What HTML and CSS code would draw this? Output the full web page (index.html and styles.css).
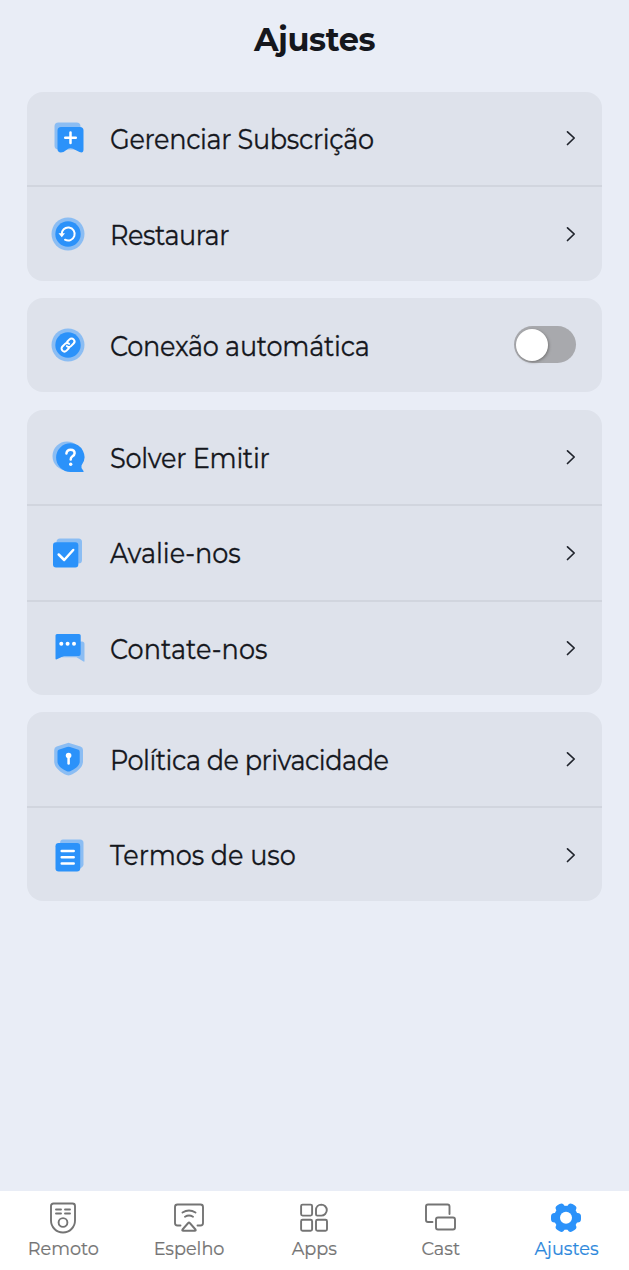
FILE: index.html
```html
<!DOCTYPE html>
<html lang="pt">
<head>
<meta charset="utf-8">
<title>Ajustes</title>
<link rel="stylesheet" href="styles.css">
</head>
<body>
<div class="screen">
  <header class="header"><h1 class="title">Ajustes</h1></header>
  <main class="groups">
    <section class="card">
      <div class="row">
        <svg class="icon" viewBox="0 0 36 36"><rect class="pale" x="4.5" y="2.5" width="26" height="27" rx="4"/><path class="blue" d="M11 7h19q3.500 0 3.500 3.500v19q0 4-4 2.500l-7-3.500q-2-.8-4 0l-5 3.500q-6 1.500-6-3V10.500Q7.500 7 11 7z"/><path class="mark" d="M20.500 12.500v10.500M15.200 17.700h10.600"/></svg>
        <span class="label l1">Gerenciar Subscrição</span>
        <svg class="chevron" viewBox="0 0 12 18"><path d="M2.500 2.800l6.700 6.200-6.700 6.500"/></svg>
      </div>
      <div class="row">
        <svg class="icon" viewBox="0 0 36 36"><circle class="pale" cx="18" cy="18" r="16.500"/><circle class="blue" cx="18" cy="18" r="12.700"/><path class="mark thin" d="M11.700 18.500A6.500 6.500 0 1 1 15 23.700"/><path class="white" d="M8.500 17.300h6.500l-3.200 4z"/></svg>
        <span class="label l2">Restaurar</span>
        <svg class="chevron" viewBox="0 0 12 18"><path d="M2.500 2.800l6.700 6.200-6.700 6.500"/></svg>
      </div>
    </section>
    <section class="card auto">
      <div class="row">
        <svg class="icon" viewBox="0 0 36 36"><circle class="pale" cx="18" cy="18" r="16.500"/><circle class="blue" cx="18" cy="18" r="12.700"/><g class="mark thin" transform="rotate(-45 18 18)"><path d="M16.300 20.900h-3.300a2.900 2.900 0 0 1 0-5.800h3.700a2.900 2.900 0 0 1 2.900 2.900"/><path d="M19.700 15.100h3.300a2.900 2.900 0 0 1 0 5.800h-3.700a2.900 2.900 0 0 1-2.900-2.900"/></g></svg>
        <span class="label l3">Conexão automática</span>
        <span class="toggle"><span class="knob"></span></span>
      </div>
    </section>
    <section class="card tall">
      <div class="row">
        <svg class="icon" viewBox="0 0 36 36"><circle class="pale" cx="17" cy="17" r="14.500"/><path class="blue" d="M20.500 4.200A13.800 13.800 0 0 1 31.500 26.500v2.500l2 3q.5 1-1 1H20.500A14.400 14.400 0 0 1 20.500 4.200z"/><path class="mark" d="M16.400 14.500q.5-3.800 4.200-3.800 4 0 4 3.500 0 1.800-2.400 3.300-1.500 1-1.500 3"/><circle class="white" cx="20.700" cy="25.300" r="1.700"/></svg>
        <span class="label l4">Solver Emitir</span>
        <svg class="chevron" viewBox="0 0 12 18"><path d="M2.500 2.800l6.700 6.200-6.700 6.500"/></svg>
      </div>
      <div class="row">
        <svg class="icon" viewBox="0 0 36 36"><rect class="pale" x="6.500" y="3.500" width="25.500" height="25" rx="3.500"/><rect class="blue" x="3" y="7.200" width="25.300" height="25.300" rx="3"/><path class="mark" d="M8.700 19.500l5.500 5.500 9-10"/></svg>
        <span class="label l5">Avalie-nos</span>
        <svg class="chevron" viewBox="0 0 12 18"><path d="M2.500 2.800l6.700 6.200-6.700 6.500"/></svg>
      </div>
      <div class="row">
        <svg class="icon" viewBox="0 0 36 36"><path class="pale" d="M12 11.500h20q2.500 0 2.500 2.500v17q0 1-1 .5l-7-4.200H12z"/><path class="blue" d="M7 4h22q1.700 0 1.700 1.500V24q0 2-2 2H14l-7.200 3.300q-1.300.5-1.300-.8v-23Q5.500 4 7 4z"/><g class="white"><circle cx="11.300" cy="13.800" r="2"/><circle cx="17.600" cy="13.800" r="2"/><circle cx="24" cy="13.800" r="2"/></g></svg>
        <span class="label l6">Contate-nos</span>
        <svg class="chevron" viewBox="0 0 12 18"><path d="M2.500 2.800l6.700 6.200-6.700 6.500"/></svg>
      </div>
    </section>
    <section class="card tall">
      <div class="row">
        <svg class="icon" viewBox="0 0 36 36"><path class="pale" d="M17 2.200q1.500-.7 3 0L30.500 5.500q2.500.8 2.500 3.500v11.500c0 6.500-7.500 11.500-12.500 13.500q-2 .8-4 0C11.500 32 4.200 27 4.200 20.500V9q0-2.700 2.500-3.500z"/><path class="blue" d="M17 6q1.500-.7 3 0l8.500 2.700q1.200.4 1.200 2v10c0 4.500-6 8-9.500 9.500q-1.700.8-3.400 0C13.300 28.700 7.500 25.200 7.500 20.700v-10q0-1.600 1.200-2z"/><circle class="white" cx="18.600" cy="14.500" r="2.800"/><path class="mark" d="M18.600 16v6.500"/></svg>
        <span class="label l7">Política de privacidade</span>
        <svg class="chevron" viewBox="0 0 12 18"><path d="M2.500 2.800l6.700 6.200-6.700 6.500"/></svg>
      </div>
      <div class="row">
        <svg class="icon" viewBox="0 0 36 36"><path class="pale" d="M13 2.500h17q3.500 0 3.500 3.500v21.500q0 2-4 4.500L10 6.500q0-4 3-4z"/><rect class="blue" x="5.500" y="6" width="24.700" height="28.500" rx="3.200"/><path class="mark" d="M11.700 14h12M11.700 20.300h12M11.700 26.600h12"/></svg>
        <span class="label l8">Termos de uso</span>
        <svg class="chevron" viewBox="0 0 12 18"><path d="M2.500 2.800l6.700 6.200-6.700 6.500"/></svg>
      </div>
    </section>
  </main>
  <nav class="tabs">
    <a class="tab"><svg class="tab-icon" viewBox="0 0 32 32"><path d="M6.500 1.500h19q2.500 0 2.500 2.500v14.500a12 12 0 0 1-24 0V4q0-2.500 2.500-2.500zM9 7.500h5M18 7.500h5M9 11.500h5M18 11.500h5"/><circle cx="16" cy="20.500" r="4.400"/></svg><span>Remoto</span></a>
    <a class="tab"><svg class="tab-icon" viewBox="0 0 32 32"><path d="M7.500 23.500h-3Q2 23.500 2 21V5q0-2.500 2.500-2.500h23Q30 2.500 30 5v16q0 2.500-2.500 2.500h-3M9.500 10.500q6.500-4 13 0M12 14.800q4-2.500 8 0M15.200 21q.8-1 1.600 0l5.700 6.500q.8 1.300-.8 1.300h-11.400q-1.600 0-.8-1.300z"/></svg><span>Espelho</span></a>
    <a class="tab"><svg class="tab-icon" viewBox="0 0 32 32"><rect x="3.100" y="2.600" width="11" height="11" rx="1.500"/><path d="M23.300 2.600a5.500 5.500 0 0 1 0 11h-4q-1.300 0-1.300-1.300V8.100a5.500 5.500 0 0 1 5.300-5.500z"/><rect x="3.100" y="17.800" width="11" height="11" rx="1.500"/><rect x="18" y="17.800" width="11" height="11" rx="1.500"/></svg><span>Apps</span></a>
    <a class="tab"><svg class="tab-icon" viewBox="0 0 32 32"><path d="M8.500 20H4q-2 0-2-2V4.500q0-2 2-2h19.500q2 0 2 2V12"/><rect x="12" y="15.500" width="19" height="12" rx="2"/></svg><span>Cast</span></a>
    <a class="tab active"><svg class="tab-icon" viewBox="0 0 32 32"><circle cx="16" cy="15.700" r="12"/><rect x="1" y="11" width="30" height="9.400" rx="3.500"/><rect x="1" y="11" width="30" height="9.400" rx="3.500" transform="rotate(60 16 15.700)"/><rect x="1" y="11" width="30" height="9.400" rx="3.500" transform="rotate(120 16 15.700)"/><circle class="white" cx="16" cy="15.700" r="6"/></svg><span>Ajustes</span></a>
  </nav>
</div>
</body>
</html>
```
FILE: styles.css
```css
* { box-sizing: border-box; }
body { margin: 0; background: #e9edf6; color: #15171d; font-family: Montserrat, Inter, "Noto Sans", sans-serif; }
.screen { height: 1270px; display: flex; flex-direction: column; }
.header { height: 91.5px; padding-top: 20px; text-align: center; }
.title { margin: 0; font-size: 32px; line-height: 40px; font-weight: 700; letter-spacing: -0.4px; }
.groups { flex: 1; display: flex; flex-direction: column; gap: 17px; padding: 0 27px; }
.card { background: #dee2eb; border-radius: 16px; }
.auto { margin: 0 0 1.5px; }
.row { height: 93.5px; display: flex; align-items: center; padding: 0 26.5px 0 23px; }
.row + .row { height: 95.5px; border-top: 2px solid #d1d5de; }
.auto .row { height: 94px; }
.tall .row { height: 94.3px; }
.tall .row + .row { height: 95.3px; }
.icon { width: 36px; height: 36px; flex: none; }
.label { flex: 1; margin-left: 23.5px; padding-top: 2px; font-size: 27.5px; line-height: 34px; -webkit-text-stroke: 0.3px currentColor; white-space: nowrap; transform: scaleX(0.93); transform-origin: 0 50%; }
.tall .label { padding-top: 1px; }
.l1 { letter-spacing: -0.37px; }
.l2 { letter-spacing: -0.5px; }
.l3 { letter-spacing: -0.28px; }
.l4 { letter-spacing: -0.28px; }
.l5 { letter-spacing: -0.05px; }
.l6 { letter-spacing: 0.05px; }
.l7 { letter-spacing: -0.52px; }
.l8 { letter-spacing: -0.05px; }
.pale { fill: #8bbdf3; }
.blue { fill: #2b92fa; }
.white { fill: #fff; }
.mark { fill: none; stroke: #fff; stroke-width: 2.5; stroke-linecap: round; stroke-linejoin: round; }
.thin { stroke-width: 2; }
.chevron { width: 12px; height: 18px; margin-right: -1.5px; fill: none; stroke: #20242c; stroke-width: 1.7; stroke-linecap: round; stroke-linejoin: round; }
.toggle { width: 62px; height: 37px; border-radius: 19px; padding: 2.5px; background: #a8a9ad; }
.knob { display: block; width: 32px; height: 32px; border-radius: 50%; background: #fff; box-shadow: 1px 1px 3px #777; }
.tabs { height: 79.5px; display: grid; grid-template-columns: repeat(5, 1fr); background: #fff; }
.tab { display: flex; flex-direction: column; align-items: center; padding-top: 11.5px; color: #747474; font-size: 19px; line-height: 24px; }
.tab span { margin-top: 3px; white-space: nowrap; -webkit-text-stroke: 0.2px currentColor; transform: scaleX(0.93); }
.tab-icon { width: 32px; height: 32px; fill: none; stroke: currentColor; stroke-width: 1.9; stroke-linecap: round; stroke-linejoin: round; }
.active { color: #2b87dc; }
.active .tab-icon { fill: #2b92fa; stroke: none; }
.active .white { fill: #fff; }
```
